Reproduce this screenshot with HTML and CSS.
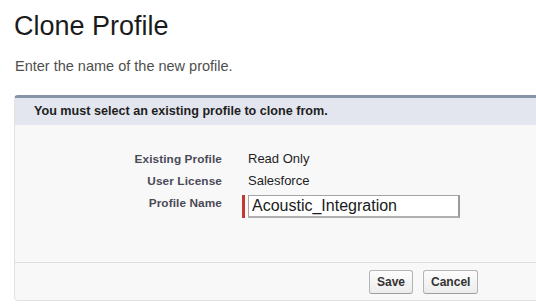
FILE: index.html
```html
<!DOCTYPE html>
<html>
<head>
<meta charset="utf-8">
<link rel="stylesheet" href="styles.css">
</head>
<body>
<div class="page">
  <h1 class="title">Clone Profile</h1>
  <p class="intro">Enter the name of the new profile.</p>
  <div class="block">
    <div class="block-header">You must select an existing profile to clone from.</div>
    <div class="block-body">
      <div class="form-grid">
        <div class="label">Existing Profile</div>
        <div class="value">Read Only</div>
        <div class="label">User License</div>
        <div class="value">Salesforce</div>
        <div class="label">Profile Name</div>
        <div class="value field">
          <span class="required"></span>
          <input class="text-input" type="text" value="Acoustic_Integration">
        </div>
      </div>
    </div>
    <div class="block-footer">
      <button class="btn">Save</button>
      <button class="btn">Cancel</button>
    </div>
  </div>
</div>
</body>
</html>
```

FILE: styles.css
```css
html, body {
  margin: 0;
  padding: 0;
  background: #ffffff;
  overflow: hidden;
}

.page {
  width: 536px;
  height: 308px;
  overflow: hidden;
  font-family: "Liberation Sans", Arial, sans-serif;
}

.title {
  margin: 0;
  padding: 10px 0 0 14px;
  font-size: 27px;
  line-height: 32px;
  font-weight: normal;
  color: #1b1b1b;
}

.intro {
  margin: 15px 0 0 0;
  padding-left: 15px;
  font-size: 14.5px;
  line-height: 18px;
  color: #4f4f4f;
}

.block {
  margin: 20px 0 0 14px;
  width: 540px;
  border-top: 3px solid #8593a9;
  border-left: 1px solid #e2e2e2;
  border-bottom: 1px solid #e0e0e0;
  border-radius: 4px 0 0 4px;
  background: #f8f8f8;
}

.block-header {
  height: 27px;
  background: #e3e6ee;
  padding-left: 19px;
  font-size: 12.6px;
  font-weight: bold;
  line-height: 27px;
  color: #1e1e1e;
}

.block-body {
  padding: 26px 0 44px 0;
}

.form-grid {
  display: grid;
  grid-template-columns: 207px 1fr;
  column-gap: 26px;
  row-gap: 6px;
  align-items: start;
}

.label {
  text-align: right;
  font-size: 11.8px;
  font-weight: bold;
  line-height: 16px;
  color: #4a4a56;
  letter-spacing: 0.1px;
}

.value {
  font-size: 13px;
  line-height: 16px;
  color: #1e1e1e;
}

.field {
  display: flex;
  align-items: stretch;
  margin-left: -6px;
  height: 23px;
}

.required {
  width: 3px;
  background: #c23934;
  margin-right: 3px;
}

.text-input {
  box-sizing: border-box;
  width: 212px;
  height: 23px;
  margin: 0;
  padding: 0 3px;
  font-family: "Liberation Sans", Arial, sans-serif;
  font-size: 16px;
  color: #1a1a1a;
  background: #ffffff;
  border-top: 1px solid #a5a5a5;
  border-left: 1px solid #a5a5a5;
  border-right: 2px solid #9a9a9a;
  border-bottom: 2px solid #b0b0b0;
  outline: none;
}

.block-footer {
  border-top: 1px solid #dcdcdc;
  height: 38px;
  box-sizing: border-box;
  padding: 7px 0 0 354px;
  display: flex;
  gap: 10px;
  align-items: flex-start;
}

.btn {
  height: 24px;
  padding: 0 7px;
  font-family: "Liberation Sans", Arial, sans-serif;
  font-size: 12px;
  font-weight: bold;
  color: #333333;
  background: linear-gradient(#fdfdfd, #ececec);
  border: 1px solid #b5b5b5;
  border-bottom-color: #9f9f9f;
  border-radius: 3px;
}
```
